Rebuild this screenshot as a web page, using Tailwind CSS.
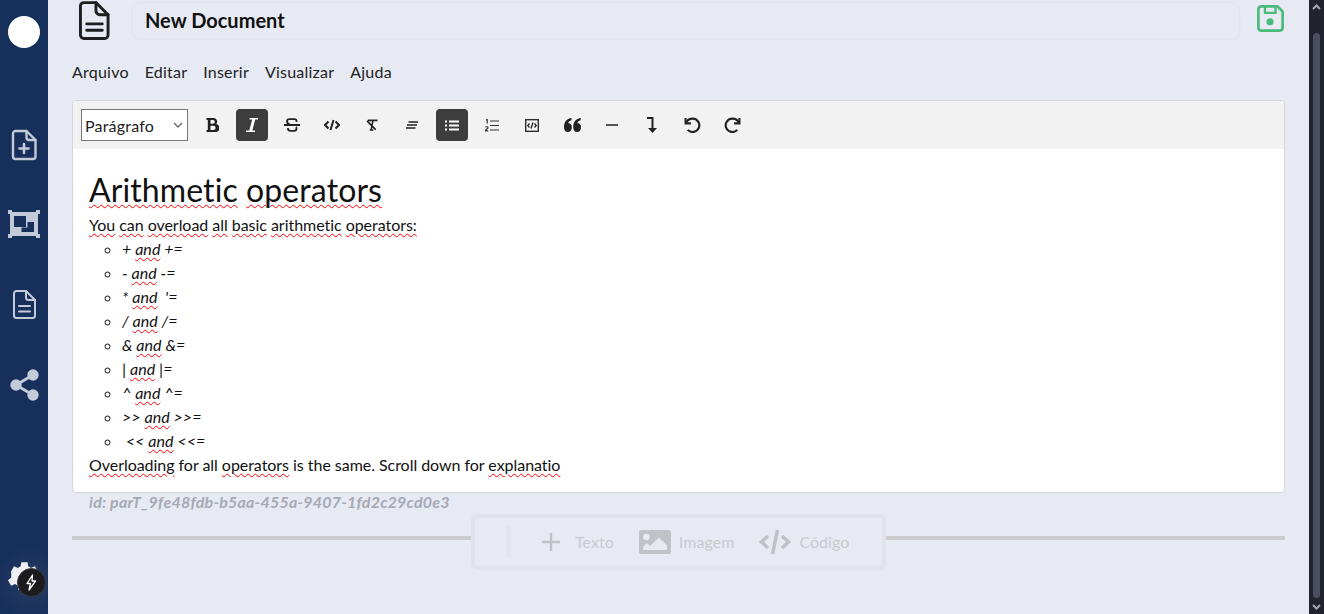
<!DOCTYPE html>
<html lang="en">
<head>
  <meta charset="UTF-8">
  <title>New Document</title>
  <script src="https://cdn.jsdelivr.net/npm/@tailwindcss/browser@4"></script>
</head>
<body class="h-[614px] overflow-hidden bg-[#e7eaf3] font-['Lato',sans-serif] text-[#111]">
<div class="flex h-[614px]">

  <!-- sidebar -->
  <aside class="relative w-[48px] shrink-0 bg-[#172f5b] flex flex-col items-center">
    <div class="w-8 h-8 rounded-full bg-white mt-[16px]"></div>
    <svg class="mt-[81px] text-[#c3cad8]" width="26" height="32" viewBox="0 0 26 32" fill="none" stroke="currentColor" stroke-width="2.4" stroke-linejoin="round" stroke-linecap="round"><path d="M4.500 2h11l9 9v16.500a2.500 2.500 0 0 1-2.500 2.500H4.500A2.500 2.500 0 0 1 2 27.500v-23A2.500 2.500 0 0 1 4.500 2z"/><path d="M15.500 2v6.500a2.500 2.500 0 0 0 2.500 2.500h6.500"/><path d="M13 15v9M8.500 19.500h9" stroke-width="2.600"/></svg>
    <svg class="mt-[49px] text-[#c3cad8]" width="32" height="28" viewBox="0 0 32 28" fill="currentColor"><path d="M0 0h4v2h24V0h4v4h-2v20h2v4h-4v-2H4v2H0v-4h2V4H0z"/><path fill="#172f5b" d="M6 6h12v11H6zM19.500 12H26v10H13.500v-4.500h6z"/></svg>
    <svg class="mt-[52px] text-[#c3cad8]" width="23" height="29" viewBox="0 0 23 29" fill="none" stroke="currentColor" stroke-width="2" stroke-linejoin="round" stroke-linecap="round"><path d="M3.500 1h9.500l9 9v15.500a2.500 2.500 0 0 1-2.500 2.500h-16.500A2.500 2.500 0 0 1 1 25.500v-22A2.500 2.500 0 0 1 3.500 1z"/><path d="M13 1v6.500a2.500 2.500 0 0 0 2.500 2.500h6.500"/><path d="M6 16h11M6 21.500h11"/></svg>
    <svg class="mt-[50px] text-[#c3cad8]" width="29" height="32" viewBox="0 0 29 32" fill="currentColor"><circle cx="23" cy="6" r="5.700"/><circle cx="6" cy="16" r="5.700"/><circle cx="23" cy="26" r="5.700"/><path d="M6 16L23 6M6 16l17 10" stroke="currentColor" stroke-width="3"/></svg>
    <svg class="absolute left-[4px] top-[557px] text-[#eef0f5]" width="38" height="38" viewBox="0 0 24 24" fill="currentColor"><path d="M19.400 13c.04-.3.1-.66.1-1s-.06-.7-.1-1l2.100-1.650-2-3.460-2.500 1a7.300 7.300 0 0 0-1.700-1l-.38-2.650h-4l-.38 2.650a7.300 7.300 0 0 0-1.700 1l-2.500-1-2 3.460L4.600 11c-.04.3-.1.66-.1 1s.06.7.1 1l-2.100 1.650 2 3.460 2.500-1c.52.4 1.080.74 1.700 1l.38 2.650h4l.38-2.650a7.300 7.300 0 0 0 1.700-1l2.500 1 2-3.460z"/></svg>
    <div class="absolute left-[17px] top-[568px] w-[29px] h-[29px] rounded-full bg-[#1b1b1d] border border-[#3a3a3c] shadow-[0_0_24px_10px_rgba(255,255,255,0.06)] flex items-center justify-center">
      <svg width="15" height="17" viewBox="0 0 15 17" fill="none" stroke="#fff" stroke-width="1.300" stroke-linejoin="round"><path d="M8.500 1L3 9.500h3.500l-1.500 6.500 6.500-9H8l.5-6z"/></svg>
    </div>
  </aside>

  <!-- page -->
  <main class="flex-1 min-w-0 flex flex-col">
    <div class="flex items-center h-[40px]">
      <div class="w-[84px] pl-[31px] shrink-0">
        <svg width="31" height="39" viewBox="0 0 32 40" fill="none" stroke="#1e1e1e" stroke-width="3" stroke-linejoin="round" stroke-linecap="round"><path d="M5 1.500h12.500L30 14v21a3.500 3.500 0 0 1-3.500 3.500H5A3.500 3.500 0 0 1 1.500 35V5A3.500 3.500 0 0 1 5 1.500z"/><path d="M17.500 1.500V10a4 4 0 0 0 4 4H30"/><path d="M8 23.500h16M8 30h16"/></svg>
      </div>
      <div class="w-[1108px] h-[37px] rounded-lg border border-[#e2e5ed] shadow-[0_1px_2px_rgba(0,0,0,0.03)] flex items-center px-[12px] text-[20px] font-bold leading-none">New Document</div>
      <svg class="ml-[17px] -mt-[3px]" width="27" height="27" viewBox="0 0 29 29" fill="none" stroke="#48bb78" stroke-width="2.800" stroke-linejoin="round"><path d="M4.500 1.500h17.500l5.500 5.500v17.500a3 3 0 0 1-3 3h-20a3 3 0 0 1-3-3v-20a3 3 0 0 1 3-3z"/><path d="M8.500 1.500v7h11.500v-7" stroke-width="2.500"/><circle cx="14" cy="18" r="3.800" fill="#48bb78" stroke="none"/></svg>
    </div>

    <nav class="flex gap-[16px] ml-[24px] mt-[22px] text-[16px] tracking-[0.22px] leading-[20px] text-[#222]">
      <span>Arquivo</span><span>Editar</span><span>Inserir</span><span>Visualizar</span><span>Ajuda</span>
    </nav>

    <!-- editor -->
    <section class="ml-[24px] mt-[18px] w-[1213px] h-[393px] bg-white rounded border border-[#d5d5d8] overflow-hidden">
      <div class="h-[48px] bg-[#f2f2f2] flex items-center pl-[8px] text-[#222]">
        <div class="w-[107px] h-[32px] mt-[-1px] bg-white border border-[#767676] flex items-center justify-between pl-[3px] pr-[3px] text-[16px] tracking-[0.2px]">
          <span class="pt-[2px]">Parágrafo</span>
          <svg width="12" height="12" viewBox="0 0 12 12" fill="none" stroke="#666" stroke-width="1.300"><path d="M2 4l4 4 4-4"/></svg>
        </div>
        <div class="flex items-center gap-[8px] ml-[8px]">
          <button class="w-8 h-8 flex items-center justify-center"><svg width="13" height="14" viewBox="0 0 12 14" fill="#222"><path d="M0 0h7a3.600 3.600 0 0 1 2.800 5.900A3.800 3.800 0 0 1 8 14H0v-2h1.300V2H0zm4 2v3.700h2.500a1.850 1.850 0 0 0 0-3.700zm0 5.800V12h3a2.100 2.100 0 0 0 0-4.200z"/></svg></button>
          <button class="w-8 h-8 rounded bg-[#3d3d3d] flex items-center justify-center"><svg width="12" height="14" viewBox="0 0 12 14" fill="#fff"><path d="M3.500 0H12v1.600H9.200L6.300 12.400H9V14H0v-1.600h3.300L6.200 1.600H3.500z"/></svg></button>
          <button class="w-8 h-8 flex items-center justify-center"><svg width="16" height="14" viewBox="0 0 16 14" fill="none" stroke="#222" stroke-width="1.800"><path d="M0 7h16"/><path d="M12.500 4V3c0-1-1-1.800-2-1.800H5.500c-1.500 0-2.500 1-2.500 2.300S4 5.800 5.500 6M4 10v.8c0 1 1 2 2.500 2h3.500c1.500 0 2.500-1 2.500-2.300 0-.7-.2-1.200-.5-1.500"/></svg></button>
          <button class="w-8 h-8 flex items-center justify-center"><svg width="16" height="12" viewBox="0 0 16 12" fill="none" stroke="#222" stroke-width="2"><path d="M4.500 2.500L1 6l3.500 3.500M11.500 2.500L15 6l-3.500 3.500M9.500 1L6.500 11"/></svg></button>
          <button class="w-8 h-8 flex items-center justify-center"><svg width="13" height="12" viewBox="0 0 14 13" fill="none" stroke="#222" stroke-width="1.700"><path d="M2 1.500h10.500M7.500 1.500L5.500 12M1 2l9.500 9.500"/><path d="M4 12h4"/></svg></button>
          <button class="w-8 h-8 flex items-center justify-center"><svg width="12" height="8" viewBox="0 0 12 8" fill="none" stroke="#222" stroke-width="1.400"><path d="M2.500 1H12M1 4h10M0 7h9.500"/></svg></button>
          <button class="w-8 h-8 rounded bg-[#3d3d3d] flex items-center justify-center"><svg width="14" height="11" viewBox="0 0 14 11" fill="none" stroke="#fff" stroke-width="1.800"><path d="M0 1.500h2M4 1.500h10M0 5.500h2M4 5.500h10M0 9.500h2M4 9.500h10"/></svg></button>
          <button class="w-8 h-8 flex items-center justify-center"><svg width="14" height="13" viewBox="0 0 14 13" fill="none" stroke="#333" stroke-width="1.200"><path d="M5 2h9M5 6.500h9M5 11h9"/><path d="M1 1l1.200-.5V4.500M.5 8.300c.5-.8 2.500-.8 2.500.5 0 1-2.500 1.700-2.500 3h2.700"/></svg></button>
          <button class="w-8 h-8 flex items-center justify-center"><svg width="14" height="13" viewBox="0 0 14 13" fill="none" stroke="#222" stroke-width="1.300"><rect x=".7" y=".7" width="12.600" height="11.600"/><path d="M4.500 4.500L2.800 6.500l1.700 2M9.500 4.500l1.700 2-1.700 2M8 3.500l-2 6"/></svg></button>
          <button class="w-8 h-8 flex items-center justify-center"><svg width="17" height="14" viewBox="0 0 17 14" fill="#222"><path d="M7.500 0v2.200C5.500 2.600 4.500 3.700 4.200 5.200c2-.3 3.600 1 3.600 4.200 0 2.700-1.500 4.600-3.900 4.600C1.300 14 0 12 0 9 0 4 2.800.6 7.500 0zM16.700 0v2.200c-2 .4-3 1.500-3.300 3 2-.3 3.600 1 3.600 4.200 0 2.700-1.500 4.600-3.900 4.600-2.600 0-3.900-2-3.900-5 0-5 2.800-8.400 7.500-9z"/></svg></button>
          <button class="w-8 h-8 flex items-center justify-center"><svg width="12" height="2" viewBox="0 0 12 2"><path d="M0 1h12" stroke="#555" stroke-width="1.800"/></svg></button>
          <button class="w-8 h-8 flex items-center justify-center"><svg width="10" height="16" viewBox="0 0 10 16" fill="#222"><path d="M0 0h6.500v11H10l-4.500 5L1 11h3.500V2H0z"/></svg></button>
          <button class="w-8 h-8 flex items-center justify-center"><svg width="17" height="16" viewBox="0 0 16 15" fill="none" stroke="#222" stroke-width="2"><path d="M1.500 1v5h5"/><path d="M1.500 6C3 3 5 1.500 8 1.500a6.300 6.300 0 1 1-4.500 10.600"/></svg></button>
          <button class="w-8 h-8 flex items-center justify-center"><svg width="17" height="16" viewBox="0 0 16 15" fill="none" stroke="#222" stroke-width="2"><path d="M14.500 1v5h-5"/><path d="M14.500 6C13 3 11 1.500 8 1.500a6.300 6.300 0 1 0 4.500 10.600"/></svg></button>
        </div>
      </div>

      <div class="pl-[16px] pt-[21px] text-[16px] leading-[24px] text-[#111] tracking-[-0.04px]">
        <h1 class="text-[32px] leading-[40px] font-normal tracking-[0.1px]"><span class="underline decoration-wavy decoration-[#f00] decoration-1 underline-offset-[2px]">Arithmetic</span> <span class="underline decoration-wavy decoration-[#f00] decoration-1 underline-offset-[2px]">operators</span></h1>
        <p class="mt-[3px]"><span class="underline decoration-wavy decoration-[#f00] decoration-1 underline-offset-[2px]">You</span> <span class="underline decoration-wavy decoration-[#f00] decoration-1 underline-offset-[2px]">can</span> <span class="underline decoration-wavy decoration-[#f00] decoration-1 underline-offset-[2px]">overload</span> <span class="underline decoration-wavy decoration-[#f00] decoration-1 underline-offset-[2px]">all</span> <span class="underline decoration-wavy decoration-[#f00] decoration-1 underline-offset-[2px]">basic</span> <span class="underline decoration-wavy decoration-[#f00] decoration-1 underline-offset-[2px]">arithmetic</span> <span class="underline decoration-wavy decoration-[#f00] decoration-1 underline-offset-[2px]">operators:</span></p>
        <ul class="pl-[33px] list-[circle] italic text-[16px] tracking-[0.05px]">
          <li>+ <span class="underline decoration-wavy decoration-[#f00] decoration-1 underline-offset-[2px]">and</span> +=</li>
          <li>- <span class="underline decoration-wavy decoration-[#f00] decoration-1 underline-offset-[2px]">and</span> -=</li>
          <li>* <span class="underline decoration-wavy decoration-[#f00] decoration-1 underline-offset-[2px]">and</span>&nbsp; '=</li>
          <li>/ <span class="underline decoration-wavy decoration-[#f00] decoration-1 underline-offset-[2px]">and</span> /=</li>
          <li>&amp; <span class="underline decoration-wavy decoration-[#f00] decoration-1 underline-offset-[2px]">and</span> &amp;=</li>
          <li>| <span class="underline decoration-wavy decoration-[#f00] decoration-1 underline-offset-[2px]">and</span> |=</li>
          <li>^ <span class="underline decoration-wavy decoration-[#f00] decoration-1 underline-offset-[2px]">and</span> ^=</li>
          <li>&gt;&gt; <span class="underline decoration-wavy decoration-[#f00] decoration-1 underline-offset-[2px]">and</span> &gt;&gt;=</li>
          <li>&nbsp;&lt;&lt; <span class="underline decoration-wavy decoration-[#f00] decoration-1 underline-offset-[2px]">and</span> &lt;&lt;=</li>
        </ul>
        <p><span class="underline decoration-wavy decoration-[#f00] decoration-1 underline-offset-[2px]">Overloading</span> for all <span class="underline decoration-wavy decoration-[#f00] decoration-1 underline-offset-[2px]">operators</span> is the same. Scroll down for <span class="underline decoration-wavy decoration-[#f00] decoration-1 underline-offset-[2px]">explanatio</span></p>
      </div>
    </section>

    <p class="ml-[41px] -mt-[1px] text-[16px] tracking-[0.22px] leading-[20px] italic font-bold text-[#a6a9b4]">id: parT_9fe48fdb-b5aa-455a-9407-1fd2c29cd0e3</p>

    <!-- add block bar -->
    <div class="relative ml-[24px] w-[1213px] h-[4px] mt-[24px] bg-[#ccc]">
      <div class="absolute left-[399px] -top-[22px] w-[415px] h-[56px] rounded-md border-4 border-[#e1e3ea] bg-[#e7eaf3] flex items-center text-[16px] tracking-[0.05px] text-[#c8cad0]">
        <div class="w-[5px] h-[32px] ml-[31px] bg-[#e4e6ed]"></div>
        <svg class="ml-[30px]" width="20" height="20" viewBox="0 0 22 22" stroke="#c0c2c8" stroke-width="2.600"><path d="M11 1v20M1 11h20"/></svg>
        <span class="ml-[14px]">Texto</span>
        <svg class="ml-[25px]" width="32" height="24" viewBox="0 0 32 24" fill="#c0c2c8"><path d="M2.500 0h27A2.500 2.500 0 0 1 32 2.500v19a2.500 2.500 0 0 1-2.500 2.500h-27A2.500 2.500 0 0 1 0 21.500v-19A2.500 2.500 0 0 1 2.500 0z"/><circle cx="7.500" cy="7" r="3.300" fill="#e7eaf3"/><path d="M4 20v-3l4-4 3 3 9-8.500 8 8V20z" fill="#e7eaf3"/></svg>
        <span class="ml-[8px]">Imagem</span>
        <svg class="ml-[25px]" width="32" height="26" viewBox="0 0 32 26" fill="none" stroke="#c0c2c8" stroke-width="3.600"><path d="M9 7l-6.500 6L9 19M23 7l6.500 6L23 19"/><path d="M18.500 1L13.500 25"/></svg>
        <span class="ml-[8px]">Código</span>
      </div>
    </div>
  </main>

  <!-- scrollbar -->
  <div class="w-[15px] shrink-0 bg-[#21242f] relative">
    <svg class="absolute left-[3px] top-[4px]" width="9" height="6" viewBox="0 0 9 6" fill="none" stroke="#a5a7b0" stroke-width="2"><path d="M1 5l3.500-3.500L8 5"/></svg>
    <div class="absolute left-[4px] top-[33px] w-[7px] h-[565px] bg-[#4b4d63] rounded"></div>
    <svg class="absolute left-[3px] bottom-[4px]" width="9" height="6" viewBox="0 0 9 6" fill="none" stroke="#a5a7b0" stroke-width="2"><path d="M1 1l3.500 3.500L8 1"/></svg>
  </div>
</div>
</body>
</html>
